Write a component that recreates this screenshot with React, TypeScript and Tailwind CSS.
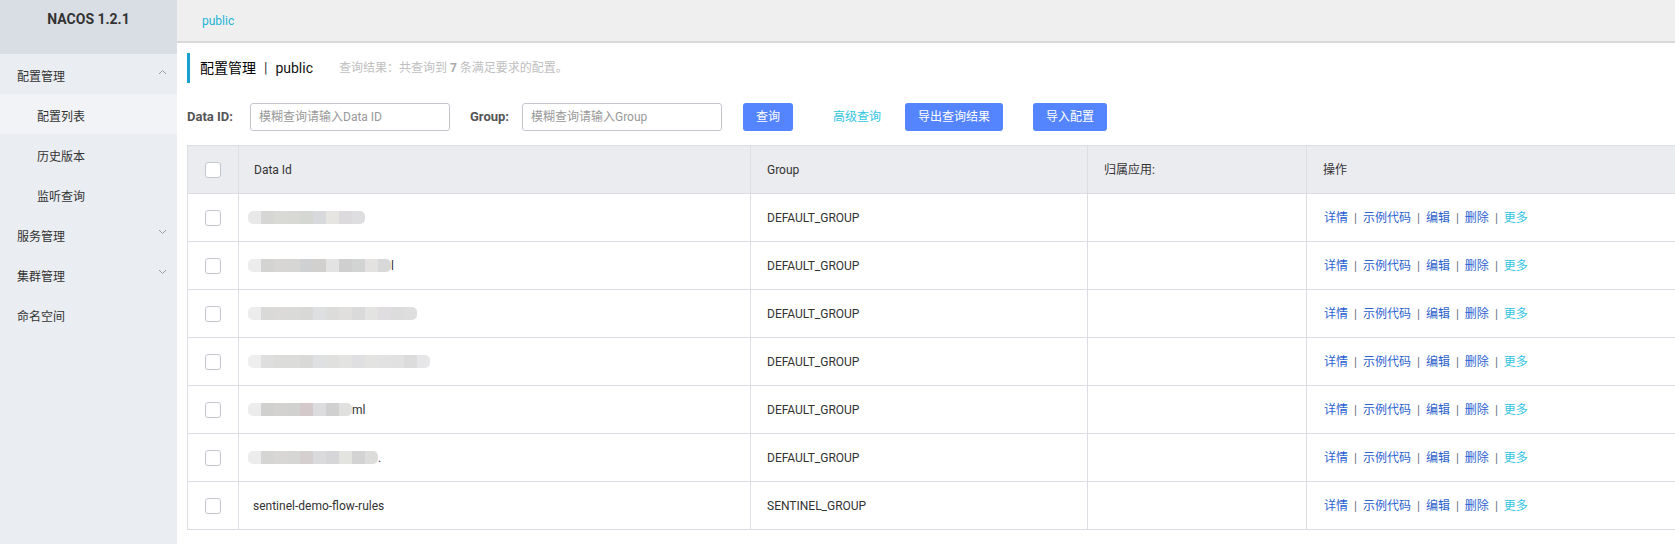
import React from 'react';

const menu = [
  { label: '配置管理', level: 0, arrow: 'up' },
  { label: '配置列表', level: 1, active: true },
  { label: '历史版本', level: 1 },
  { label: '监听查询', level: 1 },
  { label: '服务管理', level: 0, arrow: 'down' },
  { label: '集群管理', level: 0, arrow: 'down' },
  { label: '命名空间', level: 0 },
];

// pixelated blur blocks standing in for the masked config ids
const rows = [
  { blocks: ['#e8e8e8', '#d6d6d4', '#d9d9d6', '#d8d8d5', '#d5d7d2', '#d8d9dc', '#e6e5e2', '#dcdadd', '#dedde0'], suffix: '', group: 'DEFAULT_GROUP' },
  { blocks: ['#ececec', '#d3d3d1', '#d7d6d4', '#d6d6d4', '#cfd0d2', '#d2d0ce', '#e2e3e2', '#cfcfcf', '#d2d3d3', '#e3e2e0', '#d8d8d8'], suffix: 'l', group: 'DEFAULT_GROUP' },
  { blocks: ['#ececec', '#d9d9d7', '#dbdad9', '#dadad8', '#d8d9d6', '#dddfe1', '#dcdcda', '#e0dfdd', '#dadada', '#e3e3e1', '#dfdddf', '#dcdcdc', '#dedede'], suffix: '', group: 'DEFAULT_GROUP' },
  { blocks: ['#eeeeee', '#dedede', '#dcdcda', '#dcdcdb', '#d9dad8', '#dfe0e2', '#e0e0de', '#e3e3e1', '#dfdfe1', '#e3e4e2', '#e2e2e3', '#e1e1e2', '#dcdcdc', '#e6e6e8'], suffix: '', group: 'DEFAULT_GROUP' },
  { blocks: ['#ececec', '#d0d0ce', '#d3d2d0', '#d1d1cf', '#d3c9ca', '#dcdcde', '#cfd0cf', '#e0e0de'], suffix: 'ml', group: 'DEFAULT_GROUP' },
  { blocks: ['#ececec', '#d5d5d3', '#d8d7d5', '#d6d6d4', '#d5cfd0', '#dadadc', '#d6d6d8', '#e3e3e0', '#d3d3d3', '#dcdcda'], suffix: '.', group: 'DEFAULT_GROUP' },
  { blocks: [], text: 'sentinel-demo-flow-rules', suffix: '', group: 'SENTINEL_GROUP' },
];

function Chevron({ dir }: { dir: 'up' | 'down' }) {
  return (
    <svg width="9" height="6" viewBox="0 0 9 6" className="absolute right-[10px] top-[15px]">
      <polyline
        points={dir === 'up' ? '1,5 4.5,1.5 8,5' : '1,1 4.5,4.5 8,1'}
        fill="none"
        stroke="#9a9ca3"
        strokeWidth="1"
      />
    </svg>
  );
}

function Checkbox() {
  return <div className="w-4 h-4 rounded-[3px] border border-[#c4c6cf] bg-white" />;
}

function Actions() {
  const links = ['详情', '示例代码', '编辑', '删除'];
  return (
    <div className="flex items-center text-[12px]">
      {links.map((l) => (
        <React.Fragment key={l}>
          <span className="text-[#2a5fcf]">{l}</span>
          <span className="mx-[6px] text-[#6a6f80]">|</span>
        </React.Fragment>
      ))}
      <span className="text-[#33c4e0]">更多</span>
    </div>
  );
}

export default function App() {
  return (
    <div className="flex w-[1675px] h-[544px] overflow-hidden bg-white text-[#333] font-[Roboto,'Noto_Sans_CJK_SC',sans-serif]">
      {/* Sidebar */}
      <aside className="w-[177px] shrink-0 h-full bg-[#eaedf1]">
        <div className="h-[54px] bg-[#d9dde4] pt-[9px] text-center text-[14px] font-bold text-[#333]">
          NACOS 1.2.1
        </div>
        {menu.map((m) => (
          <div
            key={m.label}
            className={`relative h-10 flex items-center pt-[5px] text-[12px] text-[#333] ${
              m.level === 1 ? 'pl-[37px]' : 'pl-[17px]'
            } ${m.active ? 'bg-[#f2f3f7]' : ''}`}
          >
            {m.label}
            {m.arrow && <Chevron dir={m.arrow as 'up' | 'down'} />}
          </div>
        ))}
      </aside>

      {/* Main */}
      <main className="flex-1 min-w-0 flex flex-col">
        <div className="h-[43px] shrink-0 bg-[#efefef] border-b-2 border-[#d9d9d9] flex items-center pl-[25px] text-[12px] text-[#22b5d6]">
          public
        </div>

        <div className="pl-[10px]">
          {/* Title */}
          <div className="mt-[10px] h-[30px] flex items-center border-l-[3px] border-[#1a9fd1] pl-[10px]">
            <span className="text-[14px] text-[#000]">配置管理</span>
            <span className="text-[14px] text-[#333] mx-[8px]">|</span>
            <span className="text-[14px] text-[#111]">public</span>
            <span className="ml-[26px] text-[12px] text-[#c0c0c0]">
              查询结果：共查询到 <b className="font-bold text-[#aaa]">7</b> 条满足要求的配置。
            </span>
          </div>

          {/* Search */}
          <div className="mt-[20px] h-[28px] flex items-center text-[12px]">
            <span className="font-bold text-[13px] text-[#555] w-[63px]">Data ID:</span>
            <div className="w-[200px] h-[28px] border border-[#c4c6cf] rounded-[3px] flex items-center pl-[8px] text-[#999]">
              模糊查询请输入Data ID
            </div>
            <span className="font-bold text-[13px] text-[#555] ml-[20px] w-[52px]">Group:</span>
            <div className="w-[200px] h-[28px] border border-[#c4c6cf] rounded-[3px] flex items-center pl-[8px] text-[#999]">
              模糊查询请输入Group
            </div>
            <button className="ml-[21px] w-[50px] h-[28px] rounded-[3px] bg-[#5584ff] text-white">查询</button>
            <span className="ml-[40px] text-[#33c4e0]">高级查询</span>
            <button className="ml-[24px] w-[98px] h-[28px] rounded-[3px] bg-[#5584ff] text-white">导出查询结果</button>
            <button className="ml-[30px] w-[74px] h-[28px] rounded-[3px] bg-[#5584ff] text-white">导入配置</button>
          </div>

          {/* Table */}
          <div className="mt-[14px] w-[1520px] border-t border-l border-[#dcdee3] text-[12px]">
            <div className="flex h-[48px] bg-[#ebecf0] border-b border-[#dcdee3]">
              <div className="w-[51px] shrink-0 border-r border-[#dcdee3] flex items-center justify-center">
                <Checkbox />
              </div>
              <div className="w-[512px] shrink-0 border-r border-[#dcdee3] flex items-center pl-[15px]">Data Id</div>
              <div className="w-[337px] shrink-0 border-r border-[#dcdee3] flex items-center pl-4">Group</div>
              <div className="w-[219px] shrink-0 border-r border-[#dcdee3] flex items-center pl-4">归属应用:</div>
              <div className="flex-1 flex items-center pl-4">操作</div>
            </div>
            {rows.map((r, i) => (
              <div key={i} className="flex h-[48px] bg-white border-b border-[#dcdee3]">
                <div className="w-[51px] shrink-0 border-r border-[#dcdee3] flex items-center justify-center">
                  <Checkbox />
                </div>
                <div className="w-[512px] shrink-0 border-r border-[#dcdee3] flex items-center pl-[9px]">
                  {r.text ? (
                    <span className="pl-[5px]">{r.text}</span>
                  ) : (
                    <>
                      <div className="flex rounded-[5px] overflow-hidden blur-[0.5px]">
                        {r.blocks.map((c, j) => (
                          <div key={j} className="w-[13px] h-[13px]" style={{ backgroundColor: c }} />
                        ))}
                      </div>
                      {r.suffix && <span>{r.suffix}</span>}
                    </>
                  )}
                </div>
                <div className="w-[337px] shrink-0 border-r border-[#dcdee3] flex items-center pl-4">{r.group}</div>
                <div className="w-[219px] shrink-0 border-r border-[#dcdee3]" />
                <div className="flex-1 flex items-center pl-[17px]">
                  <Actions />
                </div>
              </div>
            ))}
          </div>
        </div>
      </main>
    </div>
  );
}
